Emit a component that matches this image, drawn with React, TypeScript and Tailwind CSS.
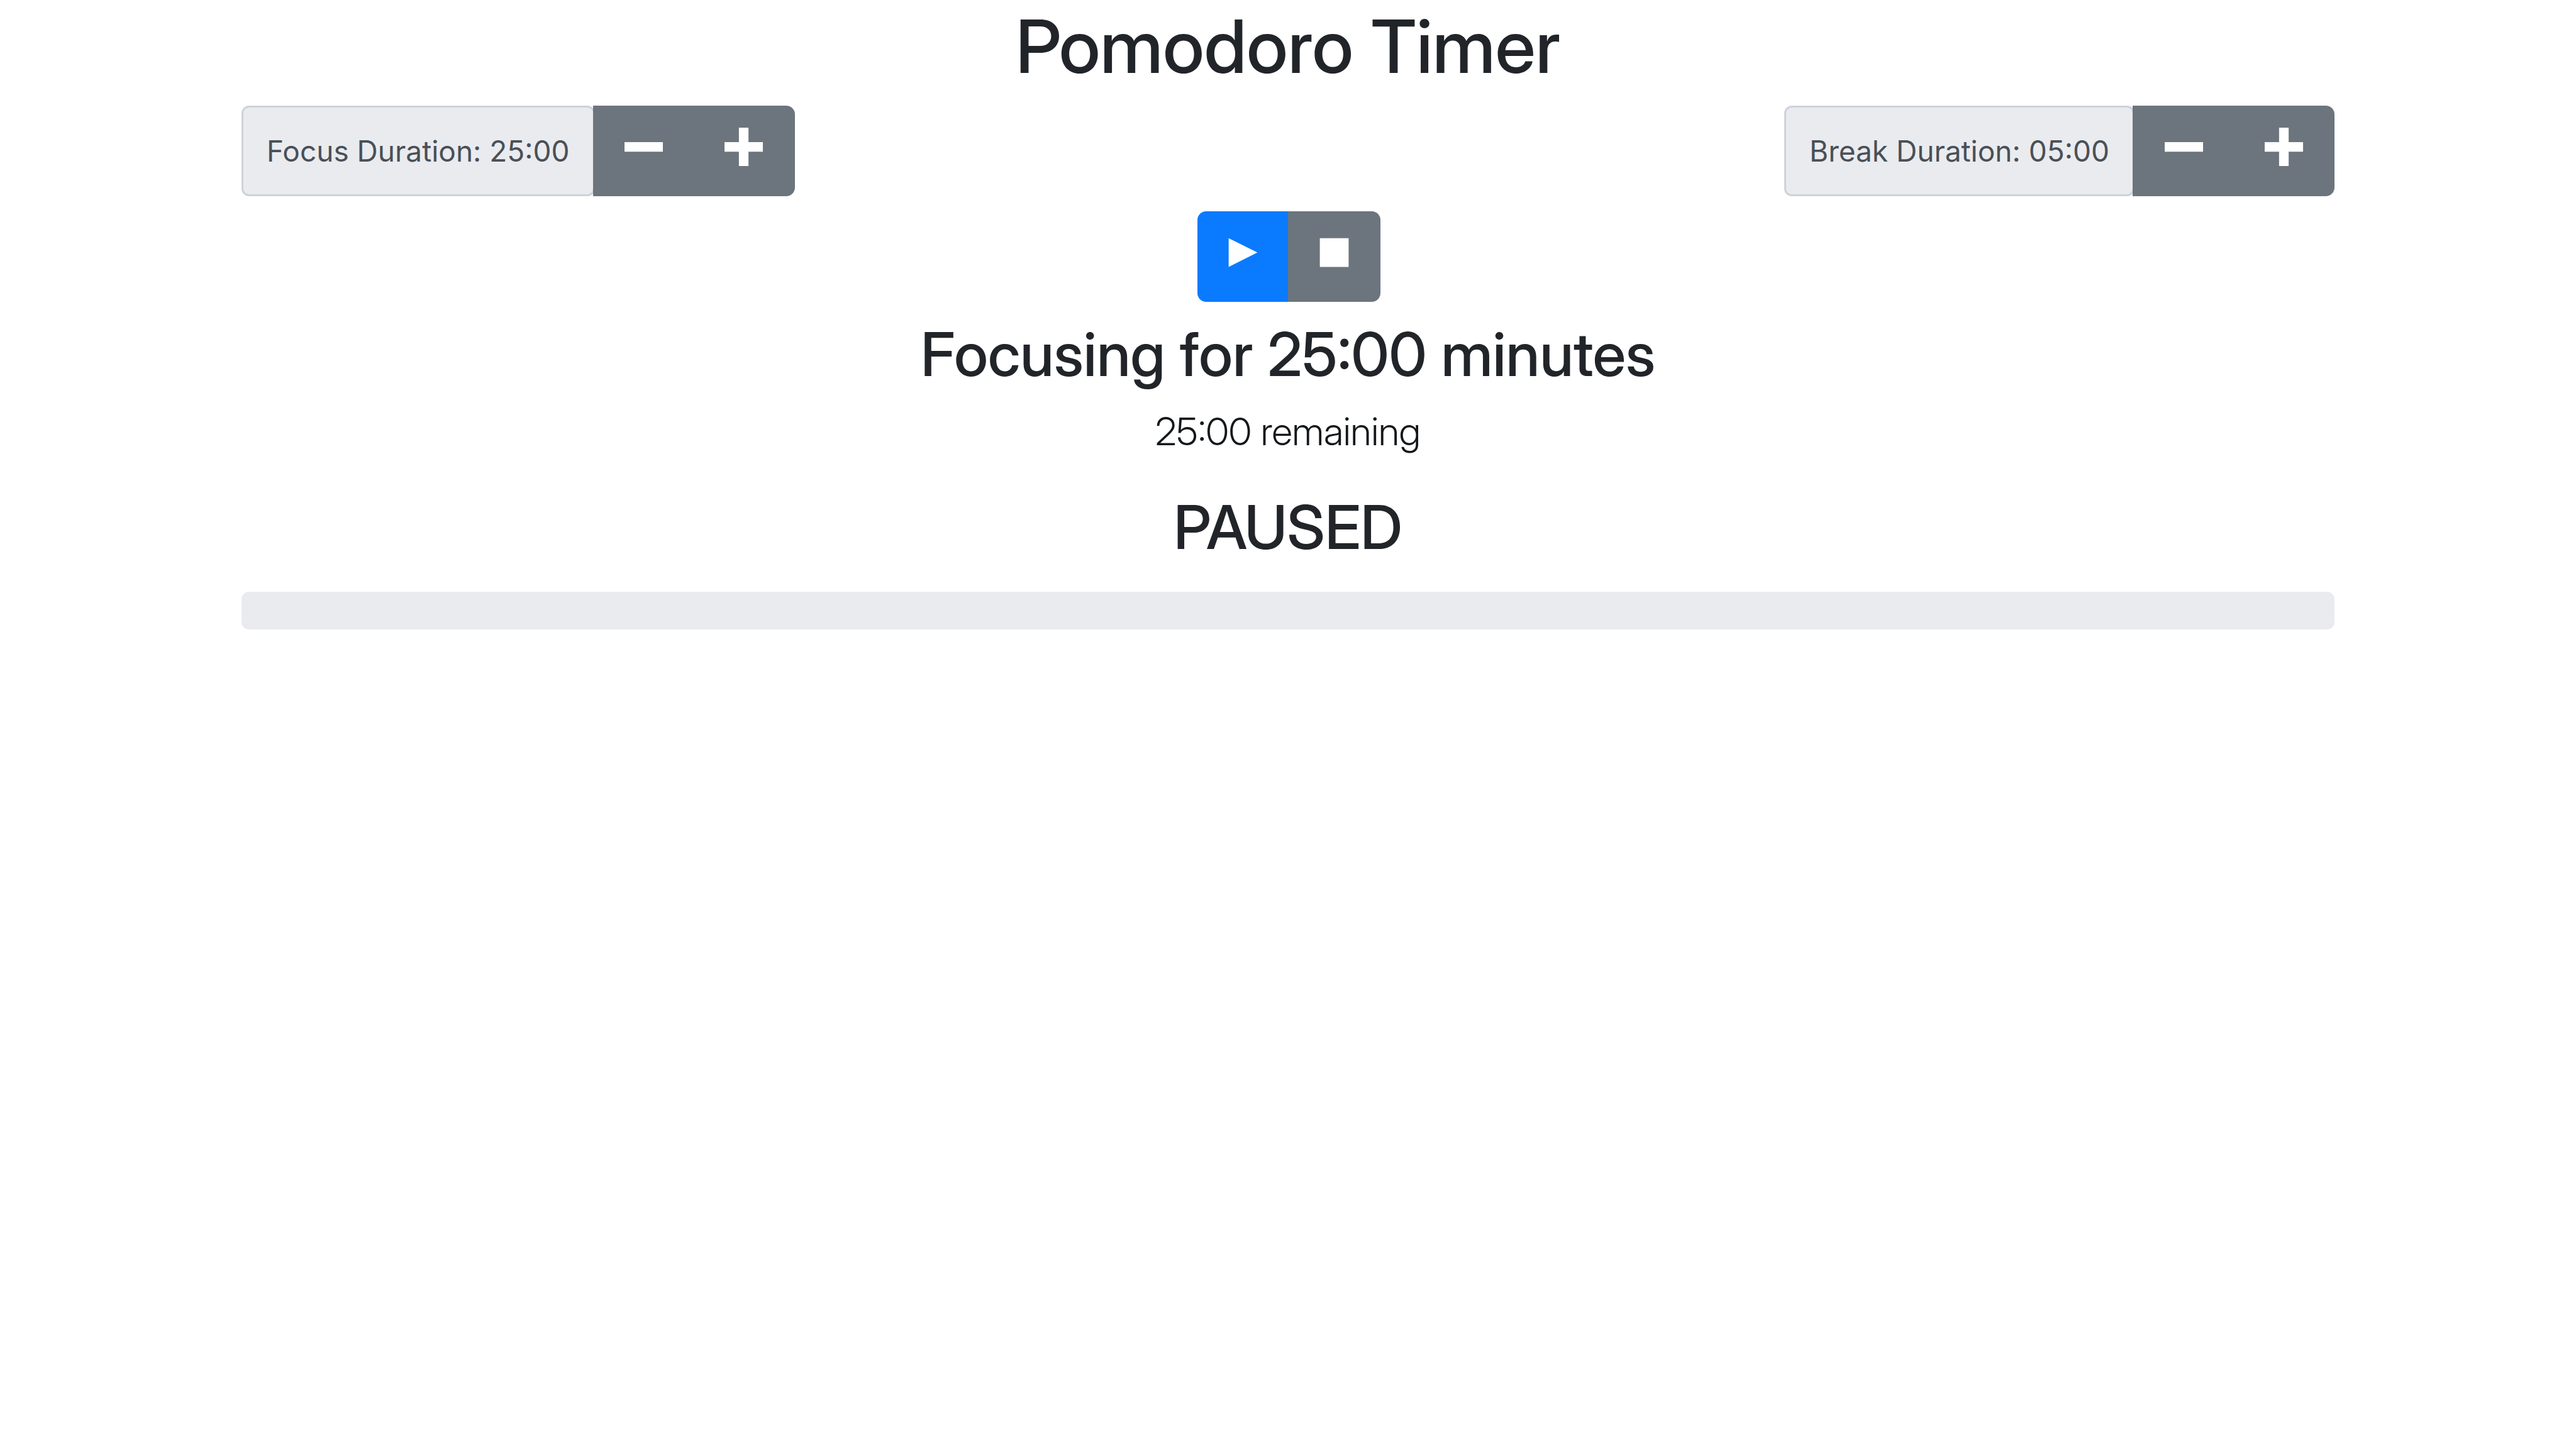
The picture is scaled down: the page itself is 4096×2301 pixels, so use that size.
import { useEffect, useState, type ReactNode } from "react";

type IconProps = { children: ReactNode };

function Icon({ children }: IconProps) {
  return (
    <svg viewBox="0 0 8 8" className="size-[61px] fill-current" aria-hidden="true">
      {children}
    </svg>
  );
}

const minus = <path d="M0 3v2h8v-2h-8z" />;
const plus = <path d="M3 0v3h-3v2h3v3h2v-3h3v-2h-3v-3h-2z" />;
const play = <path d="M1 1v6l6-3-6-3z" />;
const pause = <path d="M1 1v6h2v-6h-2zM5 1v6h2v-6h-2z" />;
const stop = <path d="M1 1v6h6v-6h-6z" />;

const format = (seconds: number) =>
  `${String(Math.floor(seconds / 60)).padStart(2, "0")}:${String(seconds % 60).padStart(2, "0")}`;

type DurationProps = {
  label: string;
  value: number;
  step: number;
  min: number;
  max: number;
  onChange: (value: number) => void;
};

function Duration({ label, value, step, min, max, onChange }: DurationProps) {
  return (
    <div role="group" aria-label={label} className="flex h-36 items-stretch">
      <span className="flex items-center rounded-xl border-3 border-[#ccd3da] bg-[#eaebef] px-[37px] font-['Inter',sans-serif] text-[46px] leading-[72px] whitespace-nowrap text-[#495057]">
        {label}: {format(value)}
      </span>
      <button
        type="button"
        aria-label={`Decrease ${label}`}
        onClick={() => onChange(Math.max(min, value - step))}
        className="-ml-[3px] flex w-[162px] justify-center bg-[#6c757d] pt-[35px] text-white"
      >
        <Icon>{minus}</Icon>
      </button>
      <button
        type="button"
        aria-label={`Increase ${label}`}
        onClick={() => onChange(Math.min(max, value + step))}
        className="-ml-[3px] flex w-[162px] justify-center rounded-r-[14px] bg-[#6c757d] pt-[35px] text-white"
      >
        <Icon>{plus}</Icon>
      </button>
    </div>
  );
}

export default function App() {
  const [focus, setFocus] = useState(1500);
  const [rest, setRest] = useState(300);
  const [elapsed, setElapsed] = useState(0);
  const [running, setRunning] = useState(false);

  useEffect(() => {
    if (!running) return;
    const id = setInterval(() => setElapsed((e) => Math.min(focus, e + 1)), 1000);
    return () => clearInterval(id);
  }, [running, focus]);

  return (
    <main className="mx-auto w-full max-w-[3328px] font-['Inter_Display','Inter',sans-serif] text-[#212529]">
      <h1 className="pt-[2px] pb-[22px] text-center text-[117px] leading-[144px] font-medium">Pomodoro Timer</h1>
      <div className="flex justify-between">
        <Duration label="Focus Duration" value={focus} step={300} min={300} max={3600} onChange={setFocus} />
        <Duration label="Break Duration" value={rest} step={60} min={60} max={900} onChange={setRest} />
      </div>
      <div className="mt-6 mb-6 flex h-36 justify-center pl-[3px]">
        <button
          type="button"
          aria-label={running ? "Pause" : "Start"}
          onClick={() => setRunning(!running)}
          className="flex w-36 justify-center rounded-l-[14px] bg-[#0a7aff] pt-[35px] text-white"
        >
          <Icon>{running ? pause : play}</Icon>
        </button>
        <button
          type="button"
          aria-label="Stop"
          onClick={() => {
            setRunning(false);
            setElapsed(0);
          }}
          className="flex w-[147px] justify-center rounded-r-[14px] bg-[#6c757d] pt-[35px] text-white"
        >
          <Icon>{stop}</Icon>
        </button>
      </div>
      <h2 className="pt-[2px] pb-[22px] text-center text-[96px] leading-[115px] font-medium">
        Focusing for {format(focus)} minutes
      </h2>
      <p className="mb-[52px] text-center text-[61px] leading-[86px] font-light text-[#14181b]">
        {format(focus - elapsed)} remaining
      </p>
      <h2 className="mb-[45px] text-center text-[96px] leading-[115px] font-medium">
        {running ? "RUNNING" : "PAUSED"}
      </h2>
      <div
        role="progressbar"
        aria-label="Session progress"
        aria-valuemin={0}
        aria-valuemax={100}
        aria-valuenow={(elapsed / focus) * 100}
        className="h-15 overflow-hidden rounded-xl bg-[#eaebef]"
      >
        <div className="h-full bg-[#0a7aff]" style={{ width: `${(elapsed / focus) * 100}%` }} />
      </div>
    </main>
  );
}
